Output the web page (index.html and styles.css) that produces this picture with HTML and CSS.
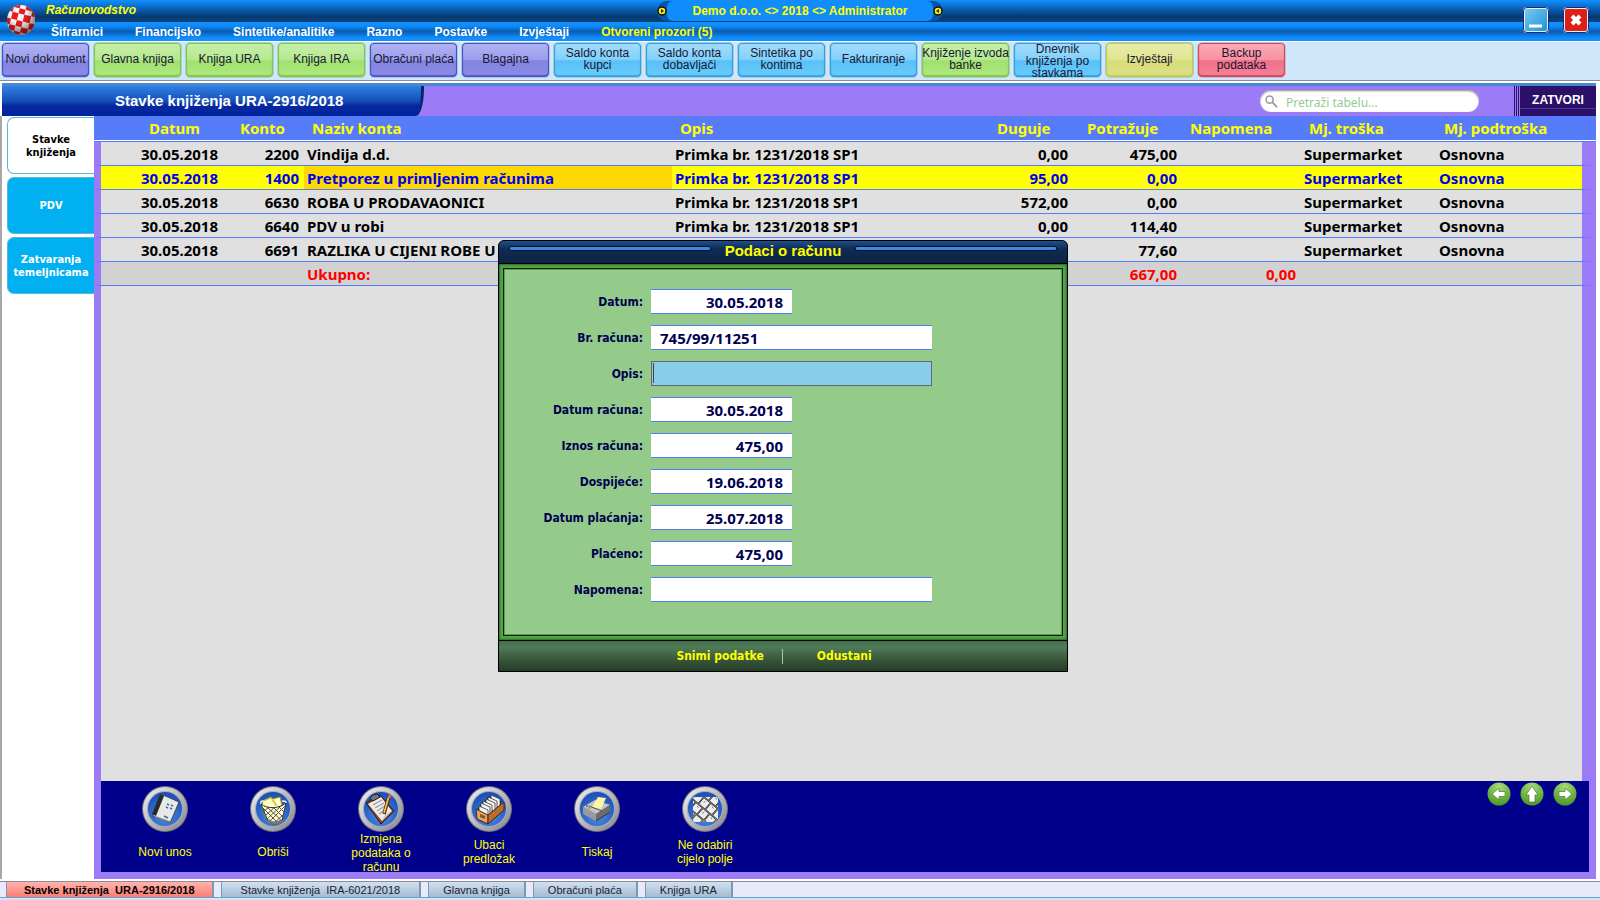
FILE: index.html
```html
<!DOCTYPE html>
<html lang="hr">
<head>
    <meta charset="UTF-8">
    <meta name="viewport" content="width=device-width, initial-scale=1.0">
    <title>Računovodstvo</title>
    <link rel="stylesheet" href="styles.css">
</head>
<body>
    <header class="app-header">
        <svg class="logo" viewBox="0 0 30 32">
            <defs>
                <radialGradient id="ball" cx="40%" cy="30%" r="70%">
                    <stop offset="40%" stop-color="#000" stop-opacity="0"/>
                    <stop offset="100%" stop-color="#300" stop-opacity=".6"/>
                </radialGradient>
                <clipPath id="ballClip"><ellipse cx="15" cy="16" rx="14" ry="15"/></clipPath>
            </defs>
            <g clip-path="url(#ballClip)">
                <rect width="30" height="32" fill="#f4f4f4"/>
                <g fill="#e81c1c" transform="rotate(14 15 16)">
                    <path d="M5-2h6v7H5zM17-2h7v7h-7zM-2 4h7v6h-7zM11 5h6v5h-6zM24 5h7v5h-7zM5 10h6v7H5zM17 10h7v7h-7zM-2 17h7v6h-7zM11 17h6v6h-6zM24 17h7v6h-7zM5 23h6v5H5zM17 23h7v5h-7zM11 28h6v6h-6z"/>
                </g>
                <rect width="30" height="32" fill="url(#ball)"/>
            </g>
        </svg>
        <div class="header-main">
            <h1 class="app-title">Računovodstvo</h1>
            <nav class="menu">
                <a href="#">Šifrarnici</a>
                <a href="#">Financijsko</a>
                <a href="#">Sintetike/analitike</a>
                <a href="#">Razno</a>
                <a href="#">Postavke</a>
                <a href="#">Izvještaji</a>
                <a href="#" class="open-windows">Otvoreni prozori (5)</a>
            </nav>
        </div>
        <div class="company">
            <svg class="dot" viewBox="0 0 10 10"><circle cx="5" cy="5" r="4" fill="#f4ee10" stroke="#111" stroke-width="1.4"/><path d="M4 3l3 2-3 2z" fill="#222"/></svg>
            <span class="company-name">Demo d.o.o. &lt;&gt; 2018 &lt;&gt; Administrator</span>
            <svg class="dot" viewBox="0 0 10 10"><circle cx="5" cy="5" r="4" fill="#f4ee10" stroke="#111" stroke-width="1.4"/><path d="M6 3L3 5l3 2z" fill="#222"/></svg>
        </div>
        <div class="window-buttons">
            <button class="win minimize" aria-label="Minimiziraj">
                <svg viewBox="0 0 22 22"><path d="M4 17h13" stroke="#fff" stroke-width="3"/></svg>
            </button>
            <button class="win close" aria-label="Zatvori">
                <svg viewBox="0 0 22 22"><path d="M7 7l8 8M15 7l-8 8" stroke="#fff" stroke-width="4"/></svg>
            </button>
        </div>
    </header>

    <div class="toolbar">
        <button class="tool violet">Novi dokument</button>
        <button class="tool green">Glavna knjiga</button>
        <button class="tool green">Knjiga URA</button>
        <button class="tool green">Knjiga IRA</button>
        <button class="tool violet">Obračuni plaća</button>
        <button class="tool violet">Blagajna</button>
        <button class="tool blue">Saldo konta kupci</button>
        <button class="tool blue">Saldo konta dobavljači</button>
        <button class="tool blue">Sintetika po kontima</button>
        <button class="tool blue">Fakturiranje</button>
        <button class="tool green">Knjiženje izvoda banke</button>
        <button class="tool blue">Dnevnik knjiženja po stavkama</button>
        <button class="tool yellow">Izvještaji</button>
        <button class="tool red">Backup podataka</button>
    </div>

    <div class="page-header">
        <h2 class="page-title">Stavke knjiženja URA-2916/2018</h2>
        <div class="search">
            <svg viewBox="0 0 14 14"><circle cx="5" cy="5" r="3.8" fill="none" stroke="#999" stroke-width="1.6"/><path d="M8 8l5 5" stroke="#999" stroke-width="2"/></svg>
            <input type="text" placeholder="Pretraži tabelu..." aria-label="Pretraži tabelu">
        </div>
        <button class="close-page">ZATVORI</button>
    </div>

    <main class="workspace">
        <nav class="side-tabs">
            <button class="side-tab selected">Stavke knjiženja</button>
            <button class="side-tab">PDV</button>
            <button class="side-tab">Zatvaranja temeljnicama</button>
        </nav>
        <div class="panel">
            <div class="grid-area">
                <table class="entries">
                    <colgroup>
                        <col class="c-date"><col class="c-konto"><col class="c-name"><col><col class="c-debit">
                        <col class="c-credit"><col class="c-note"><col class="c-place"><col class="c-sub">
                    </colgroup>
                    <thead>
                        <tr>
                            <th class="date-head">Datum</th>
                            <th class="num-head">Konto</th>
                            <th>Naziv konta</th>
                            <th>Opis</th>
                            <th class="num-head">Duguje</th>
                            <th class="num-head">Potražuje</th>
                            <th>Napomena</th>
                            <th>Mj. troška</th>
                            <th>Mj. podtroška</th>
                        </tr>
                    </thead>
                    <tbody>
                        <tr>
                            <td class="date">30.05.2018</td><td class="num">2200</td><td>Vindija d.d.</td><td>Primka br. 1231/2018 SP1</td>
                            <td class="num">0,00</td><td class="num">475,00</td><td></td><td>Supermarket</td><td>Osnovna</td>
                        </tr>
                        <tr class="current">
                            <td class="date">30.05.2018</td><td class="num">1400</td><td class="cell-current">Pretporez u primljenim računima</td><td>Primka br. 1231/2018 SP1</td>
                            <td class="num">95,00</td><td class="num">0,00</td><td></td><td>Supermarket</td><td>Osnovna</td>
                        </tr>
                        <tr>
                            <td class="date">30.05.2018</td><td class="num">6630</td><td>ROBA U PRODAVAONICI</td><td>Primka br. 1231/2018 SP1</td>
                            <td class="num">572,00</td><td class="num">0,00</td><td></td><td>Supermarket</td><td>Osnovna</td>
                        </tr>
                        <tr>
                            <td class="date">30.05.2018</td><td class="num">6640</td><td>PDV u robi</td><td>Primka br. 1231/2018 SP1</td>
                            <td class="num">0,00</td><td class="num">114,40</td><td></td><td>Supermarket</td><td>Osnovna</td>
                        </tr>
                        <tr>
                            <td class="date">30.05.2018</td><td class="num">6691</td><td>RAZLIKA U CIJENI ROBE U</td><td></td>
                            <td class="num"></td><td class="num">77,60</td><td></td><td>Supermarket</td><td>Osnovna</td>
                        </tr>
                        <tr class="total">
                            <td></td><td></td><td>Ukupno:</td><td></td>
                            <td class="num"></td><td class="num">667,00</td><td class="num">0,00</td><td></td><td></td>
                        </tr>
                    </tbody>
                </table>
                <div class="grid-rest"></div>
            </div>

            <div class="actions">
                <svg width="0" height="0" class="defs">
                    <defs>
                        <linearGradient id="rim" x1="0" y1="0" x2="1" y2="1">
                            <stop offset="0" stop-color="#f2f2f2"/><stop offset="1" stop-color="#85858c"/>
                        </linearGradient>
                        <radialGradient id="disc" cx="50%" cy="70%" r="65%">
                            <stop offset="0" stop-color="#4a90e8"/><stop offset="1" stop-color="#1c50b8"/>
                        </radialGradient>
                        <g id="coin">
                            <circle cx="23" cy="23" r="23" fill="#70747c"/>
                            <circle cx="23" cy="23" r="22" fill="url(#rim)"/>
                            <circle cx="23" cy="23" r="18" fill="#a4aabc"/>
                            <circle cx="23" cy="23" r="17" fill="url(#disc)"/>
                        </g>
                        <radialGradient id="arrowDisc" cx="50%" cy="20%" r="80%">
                            <stop offset="0" stop-color="#a8dc78"/><stop offset="1" stop-color="#4a9824"/>
                        </radialGradient>
                    </defs>
                </svg>
                <button class="action">
                    <svg viewBox="0 0 46 46"><use href="#coin"/>
                        <path d="M21 9l16 7-9 21-17-7z" fill="#e8e8e8" stroke="#333" stroke-width=".8"/>
                        <path d="M18 8l4 2-8 20-4-2z" fill="#2a2a2a"/>
                        <path d="M14 31l14 5" stroke="#888" stroke-width="1.5"/>
                        <path d="M25 18l2 1M29 19l2 1M24 21l2 1M28 22l2 1M22 30l4 2" stroke="#2878b0" stroke-width="1.5"/>
                    </svg>
                    <span>Novi unos</span>
                </button>
                <button class="action">
                    <svg viewBox="0 0 46 46"><use href="#coin"/>
                        <path d="M12 20l1-5 8-4 2 2 7-2 2 9-4 12H16z" fill="#ffffc4" stroke="#a8a000"/>
                        <path d="M13 15l8-3 5 8M23 13l4 7" fill="none" stroke="#c8c040"/>
                        <path d="M11 18c6 5 18 5 25-1l-4 18c-3 4-11 4-14 0z" fill="#fffbd0" stroke="#333"/>
                        <path d="M12 21l16 16M17 21l15 14M23 21l10 10M28 20l6 6M35 20L19 36M31 20L17 33M25 21l-9 8M19 21l-6 5M24 37l9-8" stroke="#444" stroke-width=".9"/>
                        <path d="M18 34c4 4 11 4 14 0" fill="none" stroke="#777" stroke-width="3"/>
                        <path d="M11 18c-1-3 0-3 3-3M36 17c0-2-1-2-4-2" fill="none" stroke="#eee" stroke-width="1.5"/>
                    </svg>
                    <span>Obriši</span>
                </button>
                <button class="action">
                    <svg viewBox="0 0 46 46"><use href="#coin"/>
                        <path d="M8 17l14-8 14 16-13 13z" fill="#8a4420" stroke="#331408"/>
                        <path d="M10 18l13-7 11 14-10 10z" fill="#ececec"/>
                        <path d="M15 19l9-5M17 22l9-5M19 25l8-5M21 28l7-5" stroke="#9a9a9a" stroke-width="1.2"/>
                        <path d="M26 30l7-5-9 10z" fill="#c8c8c8"/>
                        <path d="M12 12l3-3 4-1 3 3-7 4z" fill="#777" stroke="#222"/>
                        <path d="M31 10l-5 18" stroke="#4a2c08" stroke-width="3.6"/>
                        <path d="M31 10l-5 17" stroke="#eebd54" stroke-width="1.8"/>
                        <path d="M32 9l-1 3" stroke="#d66a5c" stroke-width="3"/>
                    </svg>
                    <span>Izmjena podataka o računu</span>
                </button>
                <button class="action">
                    <svg viewBox="0 0 46 46"><use href="#coin"/>
                        <path d="M11 23l12-13 13 5-13 16z" fill="#333"/>
                        <g fill="#f5f5f5" stroke="#333" stroke-width=".8">
                            <path d="M25 9l9 4v9l-9-4z"/><path d="M22 11l9 4v9l-9-4z"/><path d="M20 13l9 4v9l-9-4z"/>
                            <path d="M17 15l9 4v9l-9-4z"/><path d="M15 17l9 4v10l-9-4z"/><path d="M13 20l9 4v7l-9-4z"/>
                        </g>
                        <path d="M10 23l12 6v9l-11-5z" fill="#e0a468" stroke="#4a2408"/>
                        <path d="M22 29l16-13v8L22 38z" fill="#b86c30" stroke="#4a2408"/>
                        <path d="M14 28l5 2v3l-5-2z" fill="#8c5020"/>
                    </svg>
                    <span>Ubaci predložak</span>
                </button>
                <button class="action">
                    <svg viewBox="0 0 46 46"><use href="#coin"/>
                        <path d="M9 21l12-7 15 5-14 9z" fill="#c4c4c4"/>
                        <path d="M9 21l13 7v7L9 28z" fill="#9a9a9a"/>
                        <path d="M22 28l14-9v7l-14 9z" fill="#6c6c6c"/>
                        <path d="M18 21l6-10 8 1-5 11z" fill="#fff7a8"/>
                        <path d="M15 20l13 5" stroke="#555"/>
                        <path d="M22 35l14-9" stroke="#333"/>
                        <circle cx="13" cy="20" r="1" fill="#e03030"/><circle cx="15" cy="22" r="1" fill="#30c040"/>
                    </svg>
                    <span>Tiskaj</span>
                </button>
                <button class="action">
                    <svg viewBox="0 0 46 46"><use href="#coin"/>
                        <defs><clipPath id="keys"><rect x="11" y="11" width="25" height="25" rx="2"/></clipPath></defs>
                        <g clip-path="url(#keys)">
                            <rect x="11" y="11" width="25" height="25" fill="#888"/>
                            <g transform="rotate(40 23 23)" fill="#ececec" stroke="#333" stroke-width=".8">
                                <rect x="3" y="6" width="8" height="8" rx="1"/><rect x="12" y="6" width="8" height="8" rx="1"/><rect x="21" y="6" width="8" height="8" rx="1"/><rect x="30" y="6" width="8" height="8" rx="1"/>
                                <rect x="6" y="15" width="8" height="8" rx="1"/><rect x="15" y="15" width="8" height="8" rx="1"/><rect x="24" y="15" width="8" height="8" rx="1"/><rect x="33" y="15" width="8" height="8" rx="1"/>
                                <rect x="3" y="24" width="8" height="8" rx="1"/><rect x="12" y="24" width="8" height="8" rx="1"/><rect x="21" y="24" width="8" height="8" rx="1"/><rect x="30" y="24" width="8" height="8" rx="1"/>
                                <rect x="10" y="33" width="8" height="8" rx="1"/><rect x="20" y="33" width="8" height="8" rx="1"/>
                                <path d="M15 8v3M24 8h2M9 17h2M18 17v2M27 17h2M15 26h2M24 26v2M33 26h2" stroke="#555"/>
                            </g>
                        </g>
                    </svg>
                    <span>Ne odabiri cijelo polje</span>
                </button>
                <div class="nav-arrows">
                    <button class="arrow" aria-label="Prethodni"><svg viewBox="0 0 24 24"><circle cx="12" cy="12" r="11.5" fill="url(#arrowDisc)"/><path d="M5 12l7-6v3.500h6v5h-6V18z" fill="#fff" stroke="#3c7c20" stroke-width=".7"/></svg></button>
                    <button class="arrow" aria-label="Gore"><svg viewBox="0 0 24 24"><circle cx="12" cy="12" r="11.5" fill="url(#arrowDisc)"/><path d="M12 4l6 9h-3v7H9v-7H6z" fill="#fff" stroke="#3c7c20" stroke-width=".7"/></svg></button>
                    <button class="arrow" aria-label="Sljedeći"><svg viewBox="0 0 24 24"><circle cx="12" cy="12" r="11.5" fill="url(#arrowDisc)"/><path d="M19 12l-7-6v3.500H6v5h6V18z" fill="#fff" stroke="#3c7c20" stroke-width=".7"/></svg></button>
                </div>
            </div>
        </div>
    </main>

    <footer class="taskbar">
        <button class="task active">Stavke knjiženja&nbsp; URA-2916/2018</button>
        <button class="task wide">Stavke knjiženja&nbsp; IRA-6021/2018</button>
        <button class="task">Glavna knjiga</button>
        <button class="task">Obračuni plaća</button>
        <button class="task">Knjiga URA</button>
    </footer>

    <form class="dialog" onsubmit="return false">
        <div class="dialog-title">
            <span class="rail"></span>
            <h3>Podaci o računu</h3>
            <span class="rail"></span>
        </div>
        <div class="dialog-frame">
            <div class="dialog-body">
                <label for="datum">Datum:</label>
                <input id="datum" class="short" value="30.05.2018">
                <label for="broj">Br. računa:</label>
                <input id="broj" value="745/99/11251">
                <label for="opis">Opis:</label>
                <input id="opis" class="editing">
                <label for="datumRacuna">Datum računa:</label>
                <input id="datumRacuna" class="short" value="30.05.2018">
                <label for="iznos">Iznos računa:</label>
                <input id="iznos" class="short" value="475,00">
                <label for="dospijece">Dospijeće:</label>
                <input id="dospijece" class="short" value="19.06.2018">
                <label for="datumPlacanja">Datum plaćanja:</label>
                <input id="datumPlacanja" class="short" value="25.07.2018">
                <label for="placeno">Plaćeno:</label>
                <input id="placeno" class="short" value="475,00">
                <label for="napomena">Napomena:</label>
                <input id="napomena">
            </div>
        </div>
        <div class="dialog-footer">
            <button>Snimi podatke</button>
            <button>Odustani</button>
        </div>
    </form>
</body>
</html>
```
FILE: styles.css
```css
:root {
    --purple: #9b7cf6;
    --line: #567cfa;
    --row: #e0e0e0;
    --navy: #00008b;
    --yellow: #ffff00;
    --ui: "Liberation Sans", Arial, sans-serif;
    --data: "Noto Sans", "Open Sans", sans-serif;
    --label: "DejaVu Sans Condensed", "DejaVu Sans", sans-serif;
}

* {
    box-sizing: border-box;
}

body {
    margin: 0;
    height: 100vh;
    display: flex;
    flex-direction: column;
    overflow: hidden;
    font-family: var(--ui);
    font-size: 12px;
    background: #fff;
}

button {
    font-family: inherit;
    font-size: 12px;
    border: none;
    padding: 0;
    background: none;
    cursor: pointer;
}

h1, h2, h3 {
    margin: 0;
}

/* top bar */
.app-header {
    position: relative;
    display: flex;
    height: 41px;
    padding: 0 11px 0 6px;
    background:
        linear-gradient(#1090ff, #0a60b8 40%, #063a70 75%, #08427c) top / 100% 22px no-repeat,
        linear-gradient(#1090ff, #0f8cfa 20%, #0a5cb4 50%, #1090ff 85%) bottom / 100% 19px no-repeat;
}

.logo {
    width: 30px;
    height: 32px;
    margin-top: 4px;
}

.header-main {
    flex: 1;
    padding-left: 10px;
}

.app-title {
    font-size: 12px;
    font-style: italic;
    line-height: 20px;
    height: 24px;
    color: var(--yellow);
}

.menu {
    display: flex;
    gap: 32px;
    padding-left: 5px;
}

.menu a {
    color: #fff;
    font-weight: bold;
    line-height: 17px;
    text-decoration: none;
}

.menu .open-windows {
    color: var(--yellow);
}

.company {
    position: absolute;
    left: 50%;
    top: 1px;
    transform: translateX(-50%);
    display: flex;
    align-items: center;
    justify-content: space-between;
    width: 286px;
    height: 20px;
    border-radius: 10px;
    background: #0a54a8;
}

.dot {
    width: 10px;
    height: 10px;
}

.company-name {
    flex: 1;
    text-align: center;
    font-weight: bold;
    line-height: 20px;
    color: var(--yellow);
    border-radius: 6px;
    background: #108cfc;
}

.window-buttons {
    display: flex;
    gap: 14px;
    padding-top: 7px;
}

.win {
    width: 26px;
    height: 26px;
    border: 2px solid #eee;
    border-radius: 4px;
    outline: 1px solid #102c80;
    outline-offset: -1px;
}

.win svg {
    display: block;
    width: 22px;
    height: 22px;
}

.minimize {
    background: linear-gradient(135deg, #78c8f0, #1c94d8);
}

.close {
    background: #dc2018;
}

/* shortcut buttons */
.toolbar {
    display: flex;
    gap: 5px;
    height: 40px;
    padding: 1px 2px 0;
    border-top: 1px solid #fff;
    border-bottom: 1px solid #8c8c98;
    background: #d0e6fa;
}

.tool {
    width: 87px;
    height: 34px;
    padding-bottom: 2px;
    line-height: 12px;
    color: #181830;
    border-radius: 4px;
    outline: 1px solid #a8ccd8;
}

.violet {
    background: linear-gradient(#b0b4f4, #9c9cec 50%, #8484e0 52%, #8c8ce8);
    box-shadow: inset 0 0 0 1px #4c4ccc, inset 0 -1px 1px 1px #5858d0;
}

.green {
    background: linear-gradient(#c8f0a8, #b4e890 50%, #a0e070 52%, #b0e880);
    box-shadow: inset 0 0 0 1px #80cc40, inset 0 -1px 1px 1px #80cc40;
}

.blue {
    background: linear-gradient(#a4dcfc, #80d0fc 50%, #58c0f8 52%, #6cccfc);
    box-shadow: inset 0 0 0 1px #2ca0e4, inset 0 -1px 1px 1px #38a8e8;
}

.yellow {
    background: linear-gradient(#e8ecac, #e0e490 50%, #d8dc78 52%, #dce088);
    box-shadow: inset 0 0 0 1px #c8cc44, inset 0 -1px 1px 1px #c8cc44;
}

.red {
    background: linear-gradient(#fcacb8, #f890a0 50%, #f07088 52%, #f48498);
    box-shadow: inset 0 0 0 1px #e04060, inset 0 -1px 1px 1px #e04060;
}

/* page title strip */
.page-header {
    display: flex;
    align-items: center;
    height: 33px;
    margin: 2px 4px 0 2px;
    border-top: 3px solid #4888d0;
    background: var(--purple);
}

.page-title {
    width: 422px;
    height: 30px;
    padding-left: 113px;
    font-size: 15px;
    line-height: 30px;
    color: #fff;
    background: linear-gradient(#3080e4, #1450b8 50%, #0828a0 65%, #00249c);
    border-right: 3px solid #082470;
    border-radius: 0 0 8px 0 / 0 0 28px 0;
}

.search {
    display: flex;
    align-items: center;
    gap: 8px;
    width: 219px;
    height: 22px;
    margin-left: auto;
    padding: 0 5px;
    border-radius: 11px;
    background: #fff;
    box-shadow: inset 0 1px 2px #888;
}

.search svg {
    width: 13px;
    height: 13px;
}

.search input {
    width: 170px;
    padding: 2px 0 0;
    border: none;
    background: none;
    font-family: var(--data);
    font-size: 12px;
}

.search input::placeholder {
    color: #94cc94;
}

.close-page {
    width: 82px;
    height: 30px;
    margin-left: 35px;
    padding: 0 0 3px 6px;
    font-weight: bold;
    color: #fff;
    background:
        repeating-linear-gradient(90deg, #2a1068 0 1px, var(--purple) 1px 2px) left / 6px 100% no-repeat,
        linear-gradient(#2a1068 22px, #50389c 22px 23px, #2a1068 23px);
}

/* workspace */
.workspace {
    flex: 1;
    display: flex;
    min-height: 0;
    padding-right: 4px;
    border-left: 2px solid #a8a8a8;
}

.side-tabs {
    width: 92px;
    padding: 1px 0 0 5px;
    display: flex;
    flex-direction: column;
    gap: 3px;
}

.side-tab {
    height: 57px;
    font-family: var(--label);
    font-size: 11px;
    font-weight: bold;
    line-height: 13px;
    color: #fff;
    background: #00b0f0;
    border: 1px solid #58b8d8;
    border-right: none;
    border-radius: 7px 0 0 7px;
}

.side-tab.selected {
    color: #000;
    background: #fff;
}

.panel {
    flex: 1;
    display: flex;
    flex-direction: column;
    background: var(--purple);
}

.grid-area {
    flex: 1;
    display: flex;
    flex-direction: column;
}

.grid-rest {
    flex: 1;
    margin: 0 14px 0 7px;
    background: var(--row);
}

.entries {
    width: 100%;
    table-layout: fixed;
    border-spacing: 0;
    font-family: var(--data);
    font-size: 15px;
    font-weight: bold;
    line-height: 21px;
}

.c-date { width: 132px; }
.c-konto { width: 78px; }
.c-name { width: 368px; }
.c-debit { width: 90px; }
.c-credit { width: 109px; }
.c-note { width: 119px; }
.c-place { width: 135px; }
.c-sub { width: 160px; }

.entries th {
    height: 26px;
    padding: 0 0 0 8px;
    text-align: left;
    color: var(--yellow);
    background: var(--line);
    border-bottom: 1px solid var(--line);
    box-shadow: inset 0 -1px #fff;
}

.entries th.date-head {
    padding-left: 55px;
}

.entries th.num-head {
    padding-left: 14px;
}

.entries td {
    height: 24px;
    padding: 2px 0 0 3px;
    white-space: nowrap;
    background: var(--row);
    border-bottom: 1px solid var(--line);
}

.entries td:first-child {
    border-left: 7px solid var(--purple);
}

.entries td:last-child {
    border-right: 14px solid var(--purple);
}

.entries td.date {
    padding-right: 8px;
    text-align: right;
}

.entries td.num {
    padding-right: 5px;
    text-align: right;
}

.entries .current td {
    color: #0000f0;
    background: var(--yellow);
}

.entries .current .cell-current {
    background: #ffd800;
}

.entries .total td {
    color: #ff0000;
    background: #d2d2d2;
}

/* bottom actions */
.actions {
    display: flex;
    height: 91px;
    margin: 0 7px 7px;
    padding: 1px 12px 0 10px;
    background: var(--navy);
}

.defs {
    position: absolute;
}

.action {
    display: flex;
    flex-direction: column;
    align-items: center;
    width: 108px;
    height: 90px;
    padding-top: 4px;
}

.action svg {
    width: 46px;
    height: 46px;
    flex: none;
}

.action span {
    display: flex;
    align-items: center;
    justify-content: center;
    width: 70px;
    height: 42px;
    line-height: 14px;
    color: var(--yellow);
}

.nav-arrows {
    display: flex;
    gap: 9px;
    margin-left: auto;
}

.arrow {
    width: 24px;
    height: 24px;
}

.arrow svg {
    display: block;
}

/* open windows */
.taskbar {
    display: flex;
    gap: 7px;
    height: 19px;
    margin-top: 2px;
    padding: 0 6px 3px;
    border-top: 1px solid #8c8c98;
    background: linear-gradient(#e8eafa 15px, #68a4c8 15px 16px, #d0e6fa 16px);
}

.task {
    height: 15px;
    padding: 0 14px;
    font-size: 11px;
    line-height: 14px;
    color: #202030;
    border: solid #7c98b4;
    border-width: 0 2px 0 1px;
    background: linear-gradient(#d0e0f0, #a4bcd4);
}

.task.wide {
    padding: 0 19px;
}

.task.active {
    padding: 0 17px;
    font-weight: bold;
    color: #000;
    background: linear-gradient(#ffb4ac, #ff7c74);
}

/* invoice dialog */
.dialog {
    position: absolute;
    left: 498px;
    top: 240px;
    width: 570px;
    border: 1px solid #000;
    border-radius: 6px 6px 0 0;
    background: #000;
}

.dialog-title {
    display: flex;
    gap: 14px;
    height: 22px;
    padding: 0 10px;
    border-radius: 5px 5px 0 0;
    background: linear-gradient(#1c5090, #102c54 35%, #0c2444);
}

.dialog-title h3 {
    font-size: 15px;
    line-height: 20px;
    color: var(--yellow);
}

.rail {
    flex: 1;
    height: 5px;
    margin-top: 5px;
    border: 1px solid #041428;
    border-radius: 2px;
    background: #4088e0;
}

.dialog-frame {
    padding: 4px;
    border: solid #000;
    border-width: 1px 0;
    background: #54a448;
    box-shadow: inset 0 0 2px 1px #2c6c28;
}

.dialog-body {
    display: grid;
    grid-template-columns: 139px 1fr;
    align-items: center;
    gap: 11px 8px;
    padding: 20px 0 33px;
    border: 1px solid #0c200c;
    box-shadow: inset 0 0 0 1px #5c9c54;
    background: #94ca8a;
}

.dialog-body label {
    text-align: right;
    font-family: var(--label);
    font-size: 12px;
    font-weight: bold;
    color: #000050;
}

.dialog-body input {
    width: 281px;
    height: 25px;
    padding: 0 9px;
    font-family: var(--data);
    font-size: 15px;
    font-weight: bold;
    color: #000050;
    border: solid var(--line);
    border-width: 1px 0;
    background: #fff;
}

.dialog-body .short {
    width: 141px;
    text-align: right;
}

.dialog-body .editing {
    border: 1px solid #606870;
    background: linear-gradient(#703030, #703030) 1px 1px / 1px 20px no-repeat #87ceeb;
}

.dialog-footer {
    display: flex;
    justify-content: center;
    align-items: center;
    height: 30px;
    padding-right: 18px;
    background: linear-gradient(#40704c, #507c58 20%, #38583c 60%, #263c2a);
}

.dialog-footer button {
    padding: 0 18px;
    font-family: var(--label);
    font-weight: bold;
    line-height: 15px;
    color: var(--yellow);
}

.dialog-footer button + button {
    padding-left: 34px;
    border-left: 1px solid #b0c0b0;
}
```
